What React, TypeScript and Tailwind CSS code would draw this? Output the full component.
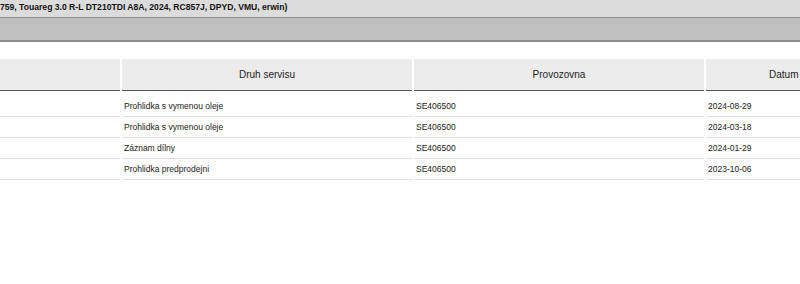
const columns = [
  "",
  "Druh servisu",
  "Provozovna",
  "Datum provedení servisu / tachometr",
];

const rows = [
  ["", "Prohlidka s vymenou oleje", "SE406500", "2024-08-29"],
  ["", "Prohlidka s vymenou oleje", "SE406500", "2024-03-18"],
  ["", "Záznam dílny", "SE406500", "2024-01-29"],
  ["", "Prohlidka predprodejni", "SE406500", "2023-10-06"],
];

export default function App() {
  return (
    <div className="w-[800px] h-[284px] overflow-hidden bg-white font-['Liberation_Sans',Arial,sans-serif]">
      <div className="h-[18px] bg-[#dcdcdc] border-b border-[#8c8c8c] pt-[2px] text-[8.6px] font-bold leading-[11px] text-[#111] whitespace-nowrap">
        759, Touareg 3.0 R-L DT210TDI A8A, 2024, RC857J, DPYD, VMU, erwin)
      </div>
      <div className="h-[24px] bg-[#c0c0c0] border-b-2 border-[#8c8c8c]" />

      <div className="mt-[17px] -ml-[170px] w-max">
        <div className="flex gap-[2px]">
          {columns.map((c, i) => (
            <div
              key={i}
              className="w-[290px] h-[32px] shrink-0 bg-[#ececec] border-b border-[#555] flex items-center justify-center text-[10px] text-[#222] whitespace-nowrap"
            >
              {c}
            </div>
          ))}
        </div>
        <div className="mt-[5px]">
          {rows.map((r, ri) => (
            <div key={ri} className="flex gap-[2px]">
              {r.map((cell, ci) => (
                <div
                  key={ci}
                  className="w-[290px] h-[21px] shrink-0 border-b border-[#dedede] flex items-center pl-[2px] text-[8.5px] text-[#1a1a1a]"
                >
                  {cell}
                </div>
              ))}
            </div>
          ))}
        </div>
      </div>
    </div>
  );
}
